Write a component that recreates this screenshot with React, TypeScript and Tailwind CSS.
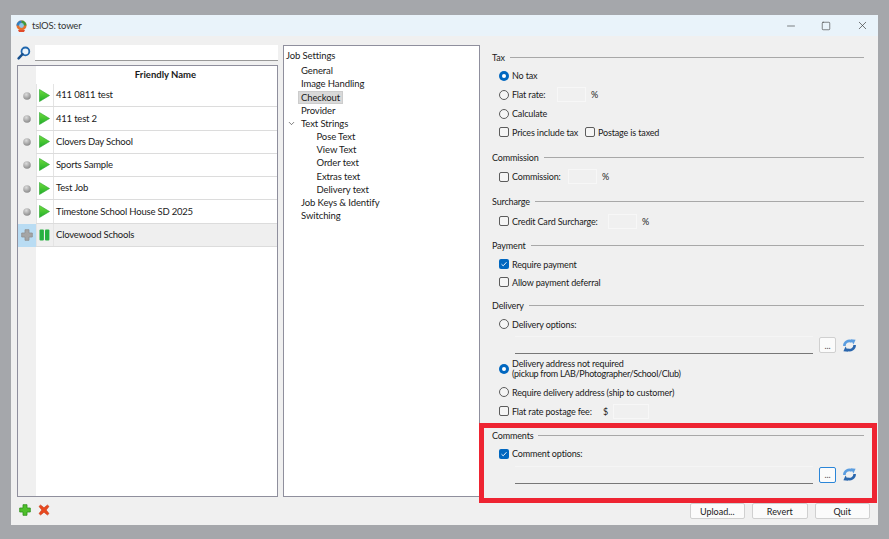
import React from 'react';
import { ChevronDown, Minus, Square, X } from 'lucide-react';

const FONT = "[font-family:'Lato',sans-serif]";

const JOBS = [
  '411 0811 test',
  '411 test 2',
  'Clovers Day School',
  'Sports Sample',
  'Test Job',
  'Timestone School House SD 2025',
];

function AppLogo() {
  return (
    <svg width="11" height="12" viewBox="0 0 11 12">
      <circle cx="5.5" cy="5.5" r="5" fill="#e8702a" />
      <path d="M5.5.5a5 5 0 0 1 5 5H7L5.5 3z" fill="#3f9a3c" />
      <path d="M.5 5.5a5 5 0 0 1 5-5V3L4 5.5z" fill="#2d7fc4" />
      <circle cx="5.5" cy="5.5" r="2.4" fill="#8cc6e8" />
      <path d="M2 10h7l-1 2H3z" fill="#e14b2a" />
    </svg>
  );
}

function SearchIcon() {
  return (
    <svg width="14" height="14" viewBox="0 0 14 14" fill="none">
      <circle cx="8.4" cy="5.4" r="3.9" stroke="#1f66ad" strokeWidth="1.8" fill="#eaf3fb" />
      <path d="M5.6 8.2 1.6 12.4" stroke="#174f8c" strokeWidth="2.4" strokeLinecap="round" />
    </svg>
  );
}

function StatusDot() {
  return (
    <svg width="8" height="8" viewBox="0 0 8 8">
      <defs>
        <radialGradient id="dot" cx="40%" cy="30%" r="75%">
          <stop offset="0%" stopColor="#dcdcdc" />
          <stop offset="100%" stopColor="#858585" />
        </radialGradient>
      </defs>
      <circle cx="4" cy="4" r="3.8" fill="url(#dot)" />
    </svg>
  );
}

function PlayIcon() {
  return (
    <svg width="11" height="13" viewBox="0 0 11 13">
      <defs>
        <linearGradient id="play" x1="0" y1="0" x2="0" y2="1">
          <stop offset="0%" stopColor="#6fdc3c" />
          <stop offset="100%" stopColor="#1fae2a" />
        </linearGradient>
      </defs>
      <path d="M0.5.5 10.5 6.5.5 12.5z" fill="url(#play)" stroke="#2aa52f" strokeWidth=".6" />
    </svg>
  );
}

function PauseIcon() {
  return (
    <svg width="11" height="12" viewBox="0 0 11 12">
      <rect x=".5" y=".5" width="4.4" height="11" rx="1" fill="#27b13f" />
      <rect x="6" y=".5" width="4.4" height="11" rx="1" fill="#27b13f" />
    </svg>
  );
}

function CrossIcon({ fill, stroke }: { fill: string; stroke: string }) {
  return (
    <svg width="12" height="12" viewBox="0 0 12 12">
      <path d="M4 .7h4V4h3.3v4H8v3.3H4V8H.7V4H4z" fill={fill} stroke={stroke} strokeWidth=".8" />
    </svg>
  );
}

function DeleteIcon() {
  return (
    <svg width="12" height="12" viewBox="0 0 12 12">
      <path
        d="M1 2.4 2.6 1 6 3.8 9.4 1 11 2.4 8.2 6 11 9.6 9.4 11 6 8.2 2.6 11 1 9.6 3.8 6z"
        fill="#e8491f"
        stroke="#c93a18"
        strokeWidth=".6"
      />
    </svg>
  );
}

function RefreshIcon() {
  return (
    <svg width="13" height="13" viewBox="0 0 13 13" fill="none">
      <path d="M1.4 7C1.2 3 5.4.6 9 2.6" stroke="#5b9de0" strokeWidth="2.6" />
      <path d="M7.6.2 12.6.8 10.4 5.4z" fill="#5b9de0" />
      <path d="M11.6 6C11.8 10 7.6 12.4 4 10.4" stroke="#2a66ad" strokeWidth="2.6" />
      <path d="M5.4 12.8.4 12.2 2.6 7.6z" fill="#2a66ad" />
    </svg>
  );
}

function Radio({ checked }: { checked?: boolean }) {
  if (checked) {
    return (
      <span className="flex size-[10px] shrink-0 items-center justify-center rounded-full bg-[#0067c0]">
        <span className="size-[4px] rounded-full bg-white" />
      </span>
    );
  }
  return <span className="size-[10px] shrink-0 rounded-full border border-[#5c5c5c] bg-[#f5f5f5]" />;
}

function Checkbox({ checked }: { checked?: boolean }) {
  if (checked) {
    return (
      <span className="flex size-[10px] shrink-0 items-center justify-center rounded-[2px] bg-[#0067c0]">
        <svg width="8" height="8" viewBox="0 0 8 8" fill="none">
          <path d="M1.5 4.2 3.2 5.8 6.5 2.2" stroke="#fff" strokeWidth=".9" />
        </svg>
      </span>
    );
  }
  return <span className="size-[10px] shrink-0 rounded-[2px] border border-[#5c5c5c] bg-[#f5f5f5]" />;
}

function SmallBox({ width }: { width: string }) {
  return <span className={`h-[15px] border border-[#f7f7f7] bg-[#f0f0f0] ${width}`} />;
}

function Section({
  title,
  height,
  children,
}: {
  title: string;
  height: string;
  children: React.ReactNode;
}) {
  return (
    <section className={height}>
      <div className="flex h-[14px] items-center gap-[5px]">
        <span>{title}</span>
        <span className="h-px flex-1 bg-[#a8a8a8]" />
      </div>
      <div className="flex flex-col pl-[7px]">{children}</div>
    </section>
  );
}

function OptionRow({ children, height = 'h-[19px]' }: { children: React.ReactNode; height?: string }) {
  return <div className={`flex items-center whitespace-nowrap ${height}`}>{children}</div>;
}

function PathField({ focused }: { focused?: boolean }) {
  return (
    <div className="mt-[2px] flex h-[19px] items-center pl-[16px]">
      <span className="h-[18px] w-[298px] border-b border-b-[#777] border-t border-t-[#f5f5f5] bg-[#f0f0f0]" />
      <span
        className={`ml-[6px] flex h-[16px] w-[17px] items-center justify-center rounded-[2px] border bg-[#fbfbfb] text-[9px] text-[#555] ${
          focused ? 'border-[#2b86d8]' : 'border-[#d0d0d0]'
        }`}
      >
        ...
      </span>
      <span className="ml-[7px] flex">
        <RefreshIcon />
      </span>
    </div>
  );
}

function WindowButton({ label }: { label: string }) {
  return (
    <button className="h-[16px] w-[55.5px] rounded-[2px] border border-[#d0d0d0] bg-[#fbfbfb] text-[9px] leading-none text-[#1a1a1a]">
      {label}
    </button>
  );
}

function JobList() {
  return (
    <div className="flex-1 overflow-hidden border border-[#8f8f9d] bg-white text-[9.5px] tracking-[-0.2px]">
      <div className="flex h-full">
        <div className="flex w-[18px] flex-col bg-[#f0f0f0]">
          <div className="h-[18px]" />
          {JOBS.map((job) => (
            <div key={job} className="flex h-[23.25px] items-center justify-center">
              <StatusDot />
            </div>
          ))}
          <div className="flex h-[23.25px] items-center justify-center bg-[#b9dcf3]">
            <CrossIcon fill="#a5a5a5" stroke="#8f8f8f" />
          </div>
        </div>
        <div className="flex-1">
          <div className="flex h-[18px] items-center pl-[18px]">
            <span className="flex-1 text-center font-bold tracking-normal">Friendly Name</span>
          </div>
          {JOBS.map((job) => (
            <div key={job} className="flex h-[23.25px] items-center border-b border-[#dcdcdc]">
              <span className="flex h-full w-[18px] items-center justify-center border-x border-[#e4e4e4] pr-[1px]">
                <PlayIcon />
              </span>
              <span className="pl-[2px]">{job}</span>
            </div>
          ))}
          <div className="flex h-[23.25px] items-center border-b border-[#dcdcdc] bg-[#efefef]">
            <span className="flex h-full w-[18px] items-center justify-center border-x border-[#e4e4e4] pr-[1px]">
              <PauseIcon />
            </span>
            <span className="pl-[2px]">Clovewood Schools</span>
          </div>
        </div>
      </div>
    </div>
  );
}

function SettingsTree() {
  const items: { label: string; indent: string; selected?: boolean; open?: boolean }[] = [
    { label: 'General', indent: 'pl-[15px]' },
    { label: 'Image Handling', indent: 'pl-[15px]' },
    { label: 'Checkout', indent: 'pl-[15px]', selected: true },
    { label: 'Provider', indent: 'pl-[15px]' },
    { label: 'Text Strings', indent: 'pl-[15px]', open: true },
    { label: 'Pose Text', indent: 'pl-[30.5px]' },
    { label: 'View Text', indent: 'pl-[30.5px]' },
    { label: 'Order text', indent: 'pl-[30.5px]' },
    { label: 'Extras text', indent: 'pl-[30.5px]' },
    { label: 'Delivery text', indent: 'pl-[30.5px]' },
    { label: 'Job Keys & Identify', indent: 'pl-[15px]' },
    { label: 'Switching', indent: 'pl-[15px]' },
  ];
  return (
    <div className="w-[197px] border border-[#8f8f9d] bg-white pl-[2px] pt-[3px] text-[9.5px] tracking-[-0.1px]">
      <div className="mb-[2px] flex h-[13.2px] items-center">Job Settings</div>
      {items.map((item) => (
        <div key={item.label} className={`relative flex h-[13.2px] items-center ${item.indent}`}>
          {item.open && <ChevronDown size={9} className="absolute left-[1px] top-[2px]" strokeWidth={1.5} />}
          <span className={item.selected ? '-mx-[3px] border border-[#cccccc] bg-[#d9d9d9] px-[2px] leading-[11px]' : ''}>
            {item.label}
          </span>
        </div>
      ))}
    </div>
  );
}

function CheckoutPanel() {
  return (
    <div className="w-[398px] pl-[12px] pr-[14px] pt-[5px] text-[9px] tracking-[-0.15px]">
      <Section title="Tax" height="h-[100.5px]">
        <div className="h-[2px]" />
        <OptionRow>
          <Radio checked />
          <span className="ml-[3px]">No tax</span>
        </OptionRow>
        <OptionRow>
          <Radio />
          <span className="ml-[3px] w-[45px]">Flat rate:</span>
          <SmallBox width="w-[29px]" />
          <span className="ml-[5px]">%</span>
        </OptionRow>
        <OptionRow>
          <Radio />
          <span className="ml-[3px]">Calculate</span>
        </OptionRow>
        <OptionRow height="h-[18px]">
          <Checkbox />
          <span className="ml-[3px] w-[73px]">Prices include tax</span>
          <span className="flex items-center">
            <Checkbox />
            <span className="ml-[3px]">Postage is taxed</span>
          </span>
        </OptionRow>
      </Section>

      <Section title="Commission" height="h-[44px]">
        <div className="h-[2.5px]" />
        <OptionRow>
          <Checkbox />
          <span className="ml-[3px] w-[56px]">Commission:</span>
          <SmallBox width="w-[29px]" />
          <span className="ml-[5px]">%</span>
        </OptionRow>
      </Section>

      <Section title="Surcharge" height="h-[44px]">
        <div className="h-[3px]" />
        <OptionRow>
          <Checkbox />
          <span className="ml-[3px] w-[96px]">Credit Card Surcharge:</span>
          <SmallBox width="w-[29px]" />
          <span className="ml-[5px]">%</span>
        </OptionRow>
      </Section>

      <Section title="Payment" height="h-[60px]">
        <div className="h-[2px]" />
        <OptionRow>
          <Checkbox checked />
          <span className="ml-[3px]">Require payment</span>
        </OptionRow>
        <OptionRow height="h-[17.5px]">
          <Checkbox />
          <span className="ml-[3px]">Allow payment deferral</span>
        </OptionRow>
      </Section>

      <Section title="Delivery" height="h-[130px]">
        <div className="h-[2px]" />
        <OptionRow>
          <Radio />
          <span className="ml-[3px]">Delivery options:</span>
        </OptionRow>
        <PathField />
        <OptionRow height="h-[25px] mt-[2px]">
          <Radio checked />
          <span className="ml-[3px] leading-[10px]">
            Delivery address not required
            <br />
            <span className="tracking-[-0.3px]">(pickup from LAB/Photographer/School/Club)</span>
          </span>
        </OptionRow>
        <OptionRow height="h-[19px] mt-[1px]">
          <Radio />
          <span className="ml-[3px]">Require delivery address (ship to customer)</span>
        </OptionRow>
        <OptionRow>
          <Checkbox />
          <span className="ml-[3px] w-[91px]">Flat rate postage fee:</span>
          <span className="w-[10px]">$</span>
          <SmallBox width="w-[36px]" />
        </OptionRow>
      </Section>

      <Section title="Comments" height="h-[60px]">
        <div className="h-[1.5px]" />
        <OptionRow>
          <Checkbox checked />
          <span className="ml-[3px]">Comment options:</span>
        </OptionRow>
        <PathField focused />
      </Section>
    </div>
  );
}

export default function App() {
  return (
    <div className={`h-[539px] w-[889px] bg-[#a5a7ab] pl-[11px] pt-[15px] text-[10px] leading-none text-[#1a1a1a] ${FONT}`}>
      <div className="relative flex h-[510px] w-[867px] flex-col bg-[#f0f0f0]">
        <header className="flex h-[21px] items-center bg-[#e9f3fa] pl-[5px] text-[9.5px] tracking-[-0.2px] text-[#333]">
          <AppLogo />
          <span className="ml-[5px]">tslOS: tower</span>
          <div className="ml-auto flex items-center text-[#333]">
            <Minus size={12} strokeWidth={1.2} />
            <Square size={10} strokeWidth={1.4} className="ml-[24px]" />
            <X size={13} strokeWidth={1.2} className="ml-[25px] mr-[9px]" />
          </div>
        </header>

        <main className="flex h-[461px] pl-[6px] pt-[9px]">
          <div className="flex w-[261px] flex-col">
            <div className="mb-[4px] flex h-[16px] items-center">
              <SearchIcon />
              <span className="ml-[4px] h-[16px] flex-1 border-b border-[#999] bg-white" />
            </div>
            <JobList />
          </div>
          <div className="ml-[5px] flex">
            <SettingsTree />
            <CheckoutPanel />
          </div>
        </main>

        <footer className="flex flex-1 items-start justify-between pl-[8px] pr-[8px] pt-[6px]">
          <div className="flex gap-[7px] pt-[1px]">
            <CrossIcon fill="#4fc02a" stroke="#2e8f1c" />
            <DeleteIcon />
          </div>
          <div className="flex gap-[7px]">
            <WindowButton label="Upload..." />
            <WindowButton label="Revert" />
            <WindowButton label="Quit" />
          </div>
        </footer>

        {/* annotation drawn over the window */}
        <div className="pointer-events-none absolute left-[468px] top-[408px] h-[80px] w-[398px] border-[5px] border-[#ee2432]" />
      </div>
    </div>
  );
}
